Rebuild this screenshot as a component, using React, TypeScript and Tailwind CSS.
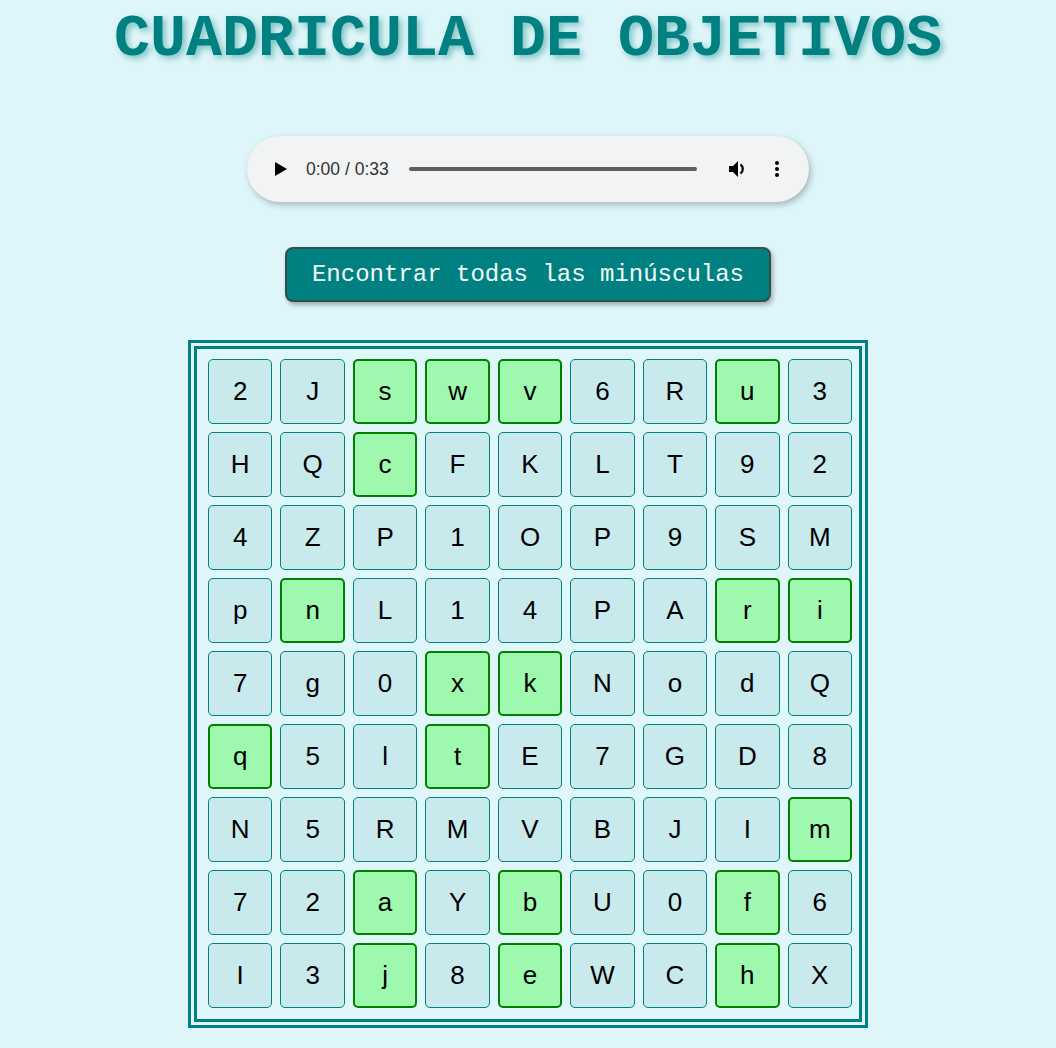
import React from 'react';

// Grid contents, row by row
const ROWS: string[][] = [
  ['2', 'J', 's', 'w', 'v', '6', 'R', 'u', '3'],
  ['H', 'Q', 'c', 'F', 'K', 'L', 'T', '9', '2'],
  ['4', 'Z', 'P', '1', 'O', 'P', '9', 'S', 'M'],
  ['p', 'n', 'L', '1', '4', 'P', 'A', 'r', 'i'],
  ['7', 'g', '0', 'x', 'k', 'N', 'o', 'd', 'Q'],
  ['q', '5', 'l', 't', 'E', '7', 'G', 'D', '8'],
  ['N', '5', 'R', 'M', 'V', 'B', 'J', 'I', 'm'],
  ['7', '2', 'a', 'Y', 'b', 'U', '0', 'f', '6'],
  ['I', '3', 'j', '8', 'e', 'W', 'C', 'h', 'X'],
];

// Cells already found (row-col)
const FOUND = new Set<string>([
  '0-2', '0-3', '0-4', '0-7',
  '1-2',
  '3-1', '3-7', '3-8',
  '4-3', '4-4',
  '5-0', '5-3',
  '6-8',
  '7-2', '7-4', '7-7',
  '8-2', '8-4', '8-7',
]);

function AudioBar() {
  return (
    <div className="w-[562px] h-[66px] rounded-full bg-[#f1f3f4] shadow-[2px_3px_6px_rgba(0,0,0,0.25)] flex items-center pl-[27px] font-['Liberation_Sans',Arial,sans-serif]">
      <svg width="14" height="16" viewBox="0 0 14 16" className="shrink-0">
        <path d="M1 1 L13 8 L1 15 Z" fill="#000" />
      </svg>
      <span className="ml-[18px] text-[17.5px] text-[#333] whitespace-nowrap">0:00 / 0:33</span>
      <div className="ml-[20px] h-[4px] w-[288px] rounded-full bg-[#5e5e5e]" />
      <svg width="24" height="24" viewBox="0 0 24 24" className="ml-[29px] shrink-0">
        <path d="M3 9v6h4l5 5V4L7 9H3z" fill="#000" />
        <path d="M14.5 7.5c1.5 1 2.3 2.7 2.3 4.5s-.8 3.5-2.3 4.5" fill="none" stroke="#000" strokeWidth="2.2" />
      </svg>
      <svg width="6" height="20" viewBox="0 0 6 20" className="ml-[24px] shrink-0">
        <circle cx="3" cy="4" r="2" fill="#000" />
        <circle cx="3" cy="10" r="2" fill="#000" />
        <circle cx="3" cy="16" r="2" fill="#000" />
      </svg>
    </div>
  );
}

export default function App() {
  return (
    <div className="min-h-screen bg-[#def6f9] flex flex-col items-center">
      <h1 className="mt-[5px] text-[60px] leading-[68px] font-bold text-[#008080] font-['Liberation_Mono','Courier_New',monospace] [text-shadow:3px_3px_6px_rgba(0,128,128,0.45)]">
        CUADRICULA DE OBJETIVOS
      </h1>

      <div className="mt-[63px]">
        <AudioBar />
      </div>

      <button
        type="button"
        className="mt-[45px] h-[55px] px-[25px] rounded-lg border-2 border-[#2f4f4f] bg-[#008080] text-[#f4fbfb] text-[24px] font-['Liberation_Mono','Courier_New',monospace] shadow-[2px_3px_5px_rgba(0,0,0,0.3)] whitespace-nowrap"
      >
        Encontrar todas las minúsculas
      </button>

      <div className="mt-[38px] mb-[22px] w-[680px] border-[9px] border-double border-[#008080] bg-[#e0f7fa] pl-[11px] pr-[7px] pt-[10px] pb-[11px]">
        <div className="grid grid-cols-9 gap-x-2 gap-y-2">
          {ROWS.map((row, r) =>
            row.map((ch, c) => {
              const found = FOUND.has(`${r}-${c}`);
              return (
                <div
                  key={`${r}-${c}`}
                  className={`h-[65px] rounded-[5px] flex items-center justify-center text-[26px] text-black font-['Liberation_Sans',Arial,sans-serif] ${
                    found
                      ? 'bg-[#9ef9ae] border-2 border-[#008000]'
                      : 'bg-[#c8eaed] border border-[#008080]'
                  }`}
                >
                  {ch}
                </div>
              );
            })
          )}
        </div>
      </div>
    </div>
  );
}
